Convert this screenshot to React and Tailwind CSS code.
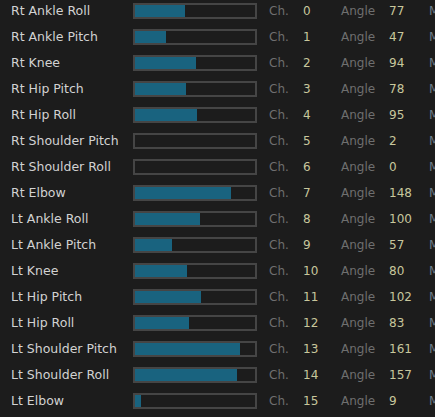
import React from "react";

const servos = [
  ["Rt Ankle Roll", 77],
  ["Rt Ankle Pitch", 47],
  ["Rt Knee", 94],
  ["Rt Hip Pitch", 78],
  ["Rt Hip Roll", 95],
  ["Rt Shoulder Pitch", 2],
  ["Rt Shoulder Roll", 0],
  ["Rt Elbow", 148],
  ["Lt Ankle Roll", 100],
  ["Lt Ankle Pitch", 57],
  ["Lt Knee", 80],
  ["Lt Hip Pitch", 102],
  ["Lt Hip Roll", 83],
  ["Lt Shoulder Pitch", 161],
  ["Lt Shoulder Roll", 157],
  ["Lt Elbow", 9],
];

function ServoRow({ name, ch, angle }) {
  // fill scales to the 120px inner track, tiny values don't show
  const raw = Math.round(angle * 0.65);
  const fill = raw < 2 ? 0 : raw;
  return (
    <div className="flex items-center h-[26px] whitespace-nowrap">
      <div className="w-[133px] shrink-0 pl-[11px] text-[12.5px] text-[#d2d2d2]">{name}</div>
      <div className="w-[124px] h-[16px] shrink-0 border-2 border-[#454545] flex items-stretch">
        <div className="bg-[#19637f]" style={{ width: fill }}></div>
      </div>
      <div className="w-[34px] shrink-0 ml-[12px] text-[#6f6f6f]">Ch.</div>
      <div className="w-[38px] shrink-0 text-[#c8c79c]">{ch}</div>
      <div className="w-[48px] shrink-0 text-[#6f6f6f]">Angle</div>
      <div className="w-[40px] shrink-0 text-[#c8c79c]">{angle}</div>
      <div className="shrink-0 text-[#6b7a88]">Move</div>
    </div>
  );
}

export default function App() {
  return (
    <div className="w-[435px] h-[417px] overflow-hidden bg-[#1c1c1c] text-[12px] font-['DejaVu_Sans',sans-serif]">
      <div className="-mt-[2px]">
        {servos.map(([name, angle], i) => (
          <ServoRow key={name} name={name} ch={i} angle={angle} />
        ))}
      </div>
    </div>
  );
}
